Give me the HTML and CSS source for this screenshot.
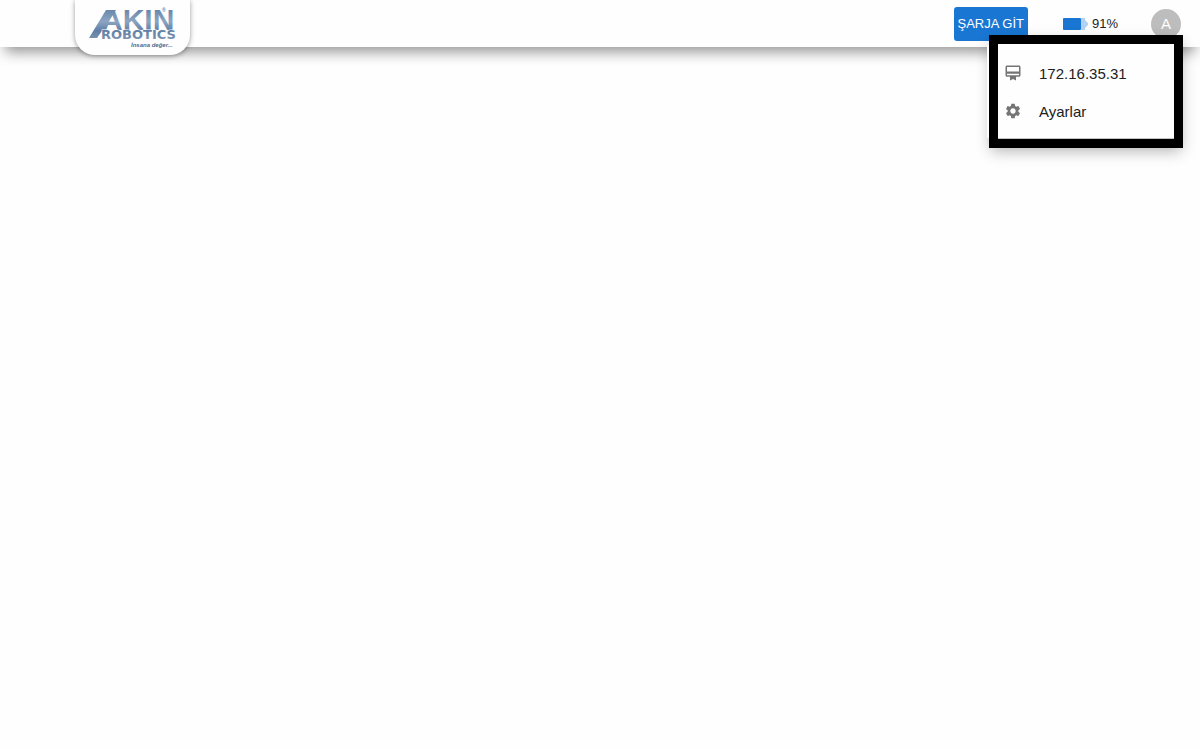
FILE: index.html
```html
<!DOCTYPE html>
<html lang="tr">
<head>
<meta charset="UTF-8">
<meta name="viewport" content="width=device-width, initial-scale=1">
<title>Akın Robotics</title>
<link rel="stylesheet" href="styles.css">
</head>
<body>

<header class="header">
    <a href="#" class="logo" aria-label="Akın Robotics">
        <svg width="88" height="44" viewBox="0 0 88 44">
            <defs>
                <linearGradient id="steel" gradientUnits="userSpaceOnUse" x1="0" y1="4" x2="0" y2="35">
                    <stop offset="0" stop-color="#6685a9"/>
                    <stop offset="0.4" stop-color="#8da5c2"/>
                    <stop offset="0.7" stop-color="#5f7fa6"/>
                    <stop offset="1" stop-color="#8095b0"/>
                </linearGradient>
            </defs>
            <path d="M0 33 L17 5 H27 L24 10 L8 33 Z" fill="url(#steel)"/>
            <text class="logo-name" x="12" y="25">AKIN</text>
            <text class="logo-sub" x="12" y="34">ROBOTICS</text>
            <text class="logo-reg" x="73" y="7">®</text>
            <text class="logo-motto" x="42" y="42">İnsana değer...</text>
        </svg>
    </a>
    <div class="actions">
        <button type="button" class="charge">ŞARJA GİT</button>
        <div class="battery">
            <svg width="25" height="14" viewBox="0 0 25 14">
                <path d="M18 1 H22 V3 L25 6 V8 L22 11 V13 H18 Z" fill="#b3d1f3"/>
                <rect x="0" y="1" width="18" height="12" rx="1" fill="#1976d2"/>
            </svg>
            <span>91%</span>
        </div>
        <button type="button" class="avatar">A</button>
    </div>

    <nav class="menu">
        <a href="#" class="menu-item">
            <svg width="18" height="18" viewBox="0 0 24 24">
                <path d="M20 2H4c-1.11 0-2 .89-2 2v11c0 1.11.89 2 2 2h4v5l4-2 4 2v-5h4c1.11 0 2-.89 2-2V4c0-1.11-.89-2-2-2zm0 13H4v-2h16v2zm0-5H4V4h16v6z"/>
            </svg>
            <span>172.16.35.31</span>
        </a>
        <a href="#" class="menu-item">
            <svg width="18" height="18" viewBox="0 0 24 24">
                <path d="M19.14 12.94c.04-.3.06-.61.06-.94 0-.32-.02-.64-.07-.94l2.03-1.58c.18-.14.23-.41.12-.61l-1.92-3.32c-.12-.22-.37-.29-.59-.22l-2.39.96c-.5-.38-1.03-.7-1.62-.94l-.36-2.54c-.04-.24-.24-.41-.48-.41h-3.84c-.24 0-.43.17-.47.41l-.36 2.54c-.59.24-1.13.57-1.62.94l-2.39-.96c-.22-.08-.47 0-.59.22L2.74 8.87c-.12.21-.08.47.12.61l2.03 1.58c-.05.3-.09.63-.09.94s.02.64.07.94l-2.03 1.58c-.18.14-.23.41-.12.61l1.92 3.32c.12.22.37.29.59.22l2.39-.96c.5.38 1.03.7 1.62.94l.36 2.54c.05.24.24.41.48.41h3.84c.24 0 .44-.17.47-.41l.36-2.54c.59-.24 1.13-.56 1.62-.94l2.39.96c.22.08.47 0 .59-.22l1.92-3.32c.12-.22.07-.47-.12-.61l-2.01-1.58zM12 15.6c-1.98 0-3.6-1.62-3.6-3.6s1.62-3.6 3.6-3.6 3.6 1.62 3.6 3.6-1.62 3.6-3.6 3.6z"/>
            </svg>
            <span>Ayarlar</span>
        </a>
    </nav>
</header>

</body>
</html>
```
FILE: styles.css
```css
body {
    margin: 0;
    min-height: 100vh;
    background: #fefefe;
    color: #212121;
    font-family: "Liberation Sans", Arial, sans-serif;
}

.header {
    position: relative;
    display: flex;
    justify-content: space-between;
    align-items: flex-start;
    height: 47px;
    padding: 0 19px 0 75px;
    background: #fefefe;
    box-shadow: 0 10px 14px -5px rgba(0, 0, 0, 0.42);
}

.logo {
    display: flex;
    justify-content: center;
    width: 115px;
    padding: 5px 0 6px;
    border-radius: 0 0 20px 20px;
    background: #fefefe;
    box-shadow: 0 1px 5px rgba(0, 0, 0, 0.4);
}

.logo svg {
    overflow: visible;
}

.logo text {
    fill: url(#steel);
    font-weight: bold;
}

.logo .logo-name {
    font-size: 30px;
}

.logo .logo-sub {
    font-family: "DejaVu Sans", sans-serif;
    font-size: 13px;
    stroke: #fefefe;
    stroke-width: 1px;
    paint-order: stroke;
}

.logo .logo-reg {
    font-size: 5px;
}

.logo .logo-motto {
    fill: #52698a;
    font-size: 6px;
    font-style: italic;
}

.actions {
    display: flex;
    align-items: center;
    height: 47px;
}

.charge {
    height: 34px;
    padding: 0 4px;
    border: 0;
    border-radius: 3px;
    background: #1976d2;
    color: #fff;
    font-family: inherit;
    font-size: 13px;
}

.battery {
    display: flex;
    align-items: center;
    gap: 4px;
    margin: 0 33px 0 35px;
    font-size: 13px;
}

.avatar {
    width: 30px;
    height: 30px;
    padding: 0;
    border: 0;
    border-radius: 50%;
    background: #bdbdbd;
    color: #fff;
    font-family: inherit;
    font-size: 15px;
}

.menu {
    position: absolute;
    top: 35px;
    right: 17px;
    box-sizing: border-box;
    width: 194px;
    padding: 10px 0 9px;
    border: 9px solid #000;
    background: #fefefe;
    box-shadow: inset 0 -1px #c4c4c4, inset -18px 2px #fefefe, inset 0 2px #d0d0d0,
        -12px 0 0 -10px #fefefe, 0 5px 14px -2px rgba(0, 0, 0, 0.3);
}

.menu-item {
    display: flex;
    align-items: center;
    gap: 17px;
    height: 38px;
    padding: 0 6px;
    color: #212121;
    font-size: 15px;
    text-decoration: none;
}

.menu-item svg {
    fill: #757575;
}
```
